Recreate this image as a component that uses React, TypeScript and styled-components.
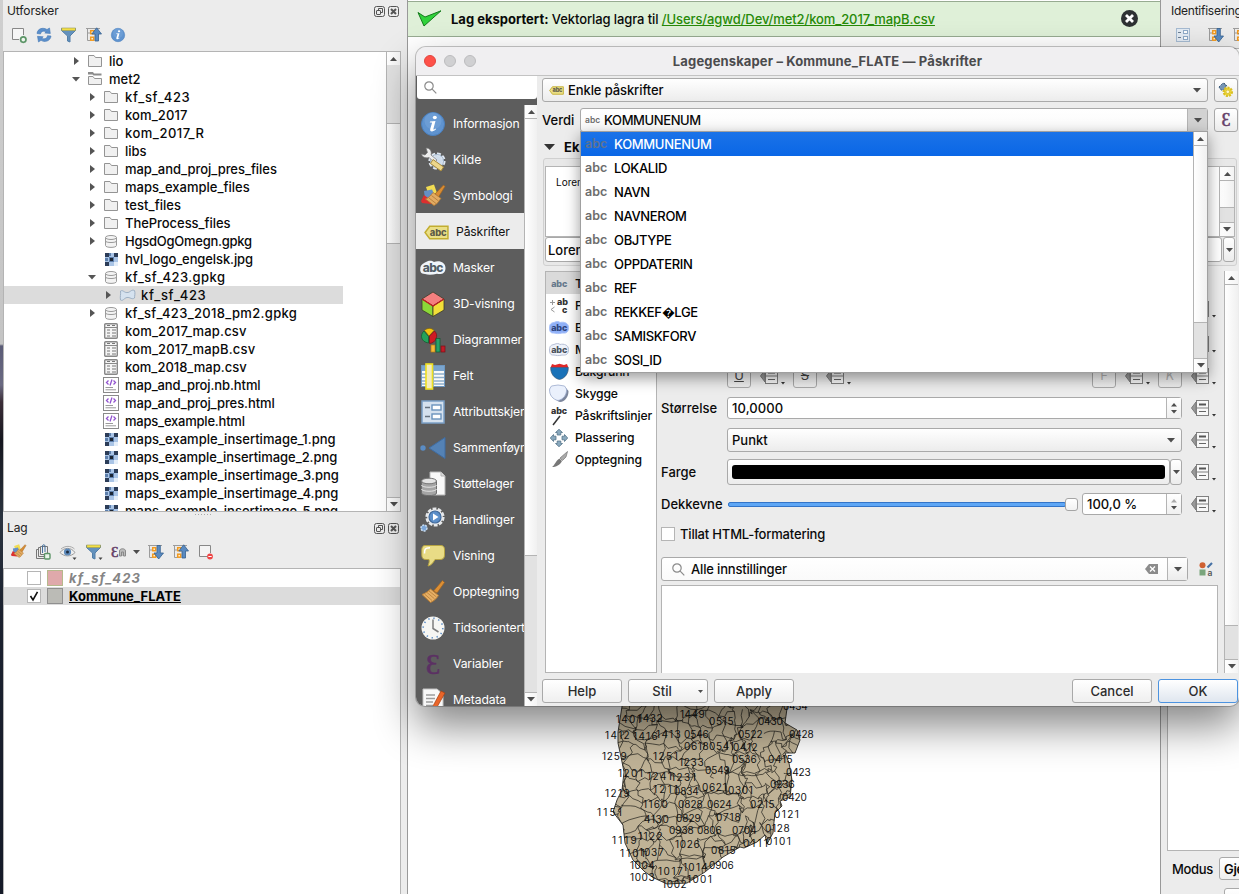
import React from "react";
import styled, { createGlobalStyle, css } from "styled-components";

const line = "#b4b4b4";
const panel = "#ececec";

const Global = createGlobalStyle`
  *, *::before, *::after { box-sizing: border-box; }
  html, body { margin: 0; padding: 0; width: 1239px; height: 894px; overflow: hidden; background: #fff; }
  body { font-family: Inter, "Liberation Sans", sans-serif; font-size: 13px; font-weight: 500; color: #0a0a0a; line-height: 16px; }
  svg { display: block; flex: none; overflow: visible; }
`;

/* ---------- window frame ---------- */

const Screen = styled.div`
  position: relative;
  display: flex;
  width: 1239px;
  height: 894px;
  overflow: hidden;
  background: ${panel};
`;

const DesktopEdge = styled.div`
  flex: none;
  width: 3px;
  background: linear-gradient(#cfcfcf 0, #c4c4c4 344px, #5b5c77 346px, #6a6a82 385px, #3b2e38 402px, #15161f 440px, #2b3440 520px, #1c2230 610px, #151a28 894px);
`;

const Docks = styled.div`
  flex: none;
  width: 404px;
  display: flex;
  flex-direction: column;
`;

const DockTitle = styled.div<{ $h: number }>`
  height: ${(p) => p.$h}px;
  flex: none;
  display: flex;
  align-items: center;
  justify-content: space-between;
  padding: 0 8px 0 4px;
  font-size: 12px;
  font-weight: 400;
  letter-spacing: -0.1px;
  color: #222;
`;

const DockButtons = styled.div`
  display: flex;
  gap: 3px;
`;

const DockTools = styled.div<{ $h: number }>`
  height: ${(p) => p.$h}px;
  flex: none;
  display: flex;
  align-items: center;
  gap: 9px;
  padding: 0 0 3px 8px;
`;

const MenuArrow = styled.span`
  margin: 0 -1px 0 -3px;
`;

const TreeBox = styled.div`
  display: flex;
  width: 398px;
  height: 461px;
  flex: none;
  border: 1px solid ${line};
  background: #fff;
`;

const TreeRows = styled.div`
  flex: 1;
  overflow: hidden;
`;

const TreeRow = styled.div<{ $depth: number; $selected?: boolean; $track: number }>`
  display: flex;
  align-items: center;
  height: 18px;
  width: ${(p) => (p.$selected ? "339px" : "auto")};
  padding-left: ${(p) => 66 + p.$depth * 16}px;
  letter-spacing: ${(p) => p.$track}px;
  background: ${(p) => (p.$selected ? "#dcdcdc" : "none")};
  white-space: nowrap;
`;

const ArrowSlot = styled.span`
  width: 12px;
  display: flex;
  justify-content: center;
`;

const IconSlot = styled.span<{ $w: number; $ml?: number; $mr?: number }>`
  flex: none;
  width: ${(p) => p.$w}px;
  margin-left: ${(p) => p.$ml ?? 0}px;
  margin-right: ${(p) => p.$mr ?? 0}px;
  display: flex;
  justify-content: center;
`;

const DockSplit = styled.div`
  height: 6px;
  flex: none;
  width: 398px;
  display: flex;
  justify-content: center;
  padding-top: 1px;
`;

const LayerBox = styled.div`
  width: 398px;
  flex: 1;
  border: 1px solid ${line};
  border-bottom: 0;
  background: #fff;
`;

const LayerRow = styled.div<{ $active?: boolean }>`
  display: flex;
  align-items: center;
  height: 18px;
  padding-left: 23px;
  background: ${(p) => (p.$active ? "#dcdcdc" : "#fff")};
  font-weight: 700;
  letter-spacing: ${(p) => (p.$active ? "0.05px" : "1.1px")};
  color: ${(p) => (p.$active ? "#000" : "#858585")};
  font-style: ${(p) => (p.$active ? "normal" : "italic")};
  text-decoration: ${(p) => (p.$active ? "underline" : "none")};
`;

const Check = styled.span`
  width: 14px;
  height: 14px;
  flex: none;
  border: 1px solid #b5b5b5;
  background: #fff;
  display: flex;
  align-items: center;
  justify-content: center;
`;

const Swatch = styled.span<{ $fill: string; $edge: string }>`
  width: 16px;
  height: 16px;
  margin: 0 6px;
  background: ${(p) => p.$fill};
  border: 1px solid ${(p) => p.$edge};
`;

/* ---------- scroll bars ---------- */

const Bar = styled.div<{ $w?: number }>`
  flex: none;
  width: ${(p) => p.$w ?? 14}px;
  display: flex;
  flex-direction: column;
  border-left: 1px solid ${line};
  background: #e2e2e2;
`;
const BarButton = styled.div`
  height: 13px;
  flex: none;
  display: flex;
  align-items: center;
  justify-content: center;
  background: linear-gradient(90deg, #fff, #f4f4f4);
`;
const BarHandle = styled.div<{ $top: number; $h: number }>`
  margin-top: ${(p) => p.$top}px;
  height: ${(p) => p.$h}px;
  border: solid ${line};
  border-width: 1px 0;
  background: linear-gradient(90deg, #fff, #f0f0f0);
`;
const BarGroove = styled.div`
  flex: 1;
  border-bottom: 1px solid ${line};
`;

const Tri = ({ dir = "down", c = "#4d4d4d", w = 8 }: { dir?: string; c?: string; w?: number }) => {
  const h = w / 2 + 0.5;
  if (dir === "right")
    return <svg width={5} height={8}><path d="M0 0L5 4L0 8Z" fill={c} /></svg>;
  return (
    <svg width={w} height={h}>
      <path d={dir === "up" ? `M0 ${h}H${w}L${w / 2} 0Z` : `M0 0H${w}L${w / 2} ${h}Z`} fill={c} />
    </svg>
  );
};

const ScrollBar = ({ top = 0, h, w }: { top?: number; h: number; w?: number }) => (
  <Bar $w={w}>
    <BarButton><Tri dir="up" w={7} /></BarButton>
    <BarHandle $top={top} $h={h} />
    <BarGroove />
    <BarButton><Tri w={8} /></BarButton>
  </Bar>
);

/* ---------- icons ---------- */

const FloatIcon = () => (
  <svg width="11" height="11" fill="none" stroke="#555">
    <rect x=".5" y=".5" width="10" height="10" rx="2" />
    <rect x="2.500" y="4.500" width="4" height="4" rx=".5" /><path d="M4.500 4.500V2.500H8.500V6.500H6.500" />
  </svg>
);
const CloseIcon = () => (
  <svg width="11" height="11" fill="none" stroke="#555">
    <rect x=".5" y=".5" width="10" height="10" rx="2" />
    <path d="M3 3L8 8M8 3L3 8" strokeWidth="2" />
  </svg>
);
const AddLayerIcon = () => (
  <svg width="16" height="16"><path d="M8 12.500H1.500V1.500H12.500V8" fill="#f6f6f6" stroke="#888" />
    <circle cx="12.300" cy="12.600" r="2.700" fill="#eef5ee" stroke="#5c9567" strokeWidth="1.700" /></svg>
);
const RefreshIcon = () => (
  <svg width="16" height="16" fill="#5b8fcb" stroke="#4479b5" strokeWidth=".6">
    <path d="M1 6.500C1.500 1.500 7 0 11 2.500L13.500 1L14.300 6.500L8.800 6L10.300 4.800C7.500 3.500 5 4.300 4.500 7Z" />
    <path d="M15 9C14.500 14.200 8.500 15.800 5 13.300L2.500 15L1.500 9.300L7.200 9.800L5.700 11.200C8.500 12.500 11 11.500 11.500 8.700Z" />
  </svg>
);
const FunnelIcon = ({ menu }: { menu?: boolean }) => (
  <svg width="16" height="16">
    <path d="M.5 1.500H14.500V3.500L9 9V15L6.500 14V9L.5 3.500Z" fill="#6391bd" stroke="#527fa9" />
    <rect x=".8" y="1" width="13.500" height="2.600" fill="#f3df45" stroke="#9a9a55" strokeWidth=".6" />
    {menu && <path d="M12.500 13.500H16.500L14.500 16Z" fill="#444" />}
  </svg>
);
const TreeArrowIcon = ({ down }: { down?: boolean }) => (
  <svg width="16" height="16">
    <path d="M0 1.500H14M1.500 1.500V13.500H4M1.500 6H4" stroke="#9c9c9c" fill="none" />
    <rect x="4.700" y="3.700" width="3" height="3" fill="#fff3dc" stroke="#f29a1f" strokeWidth="1.500" />
    <rect x="4.700" y="10.200" width="3" height="3" fill="#fff3dc" stroke="#f29a1f" strokeWidth="1.500" />
    <path d={down ? "M9 1.500H12.300V9H15.500L10.700 15L6 9H9Z" : "M9 14V7H5.800L10.700 .8L15.500 7H12.500V14Z"} fill="#5a8ac0" stroke="#35618f" strokeWidth=".8" />
  </svg>
);
const InfoIcon = ({ s = 14 }: { s?: number }) => (
  <svg width={s} height={s} viewBox="0 0 24 24">
    <circle cx="12" cy="12" r="11.500" fill="#5f93cf" stroke="#4a7fbd" />
    <circle cx="12" cy="9" r="8.500" fill="#79a8dc" opacity=".5" />
    <ellipse cx="13.800" cy="5.500" rx="2" ry="1.800" fill="#fff" />
    <path d="M9 9.500L14.500 9L12.400 17C12.300 18 13.200 17.700 14.700 16.500L15 17.300C12.500 20 8.500 20.500 9.200 17L11 11C10.800 10.300 10 10.500 8.800 10.600Z" fill="#fff" />
  </svg>
);
const BrushIcon = ({ s = 24 }: { s?: number }) => (
  <svg width={s} height={s} viewBox="0 0 24 24">
    <path d="M5 3L13 .5L16 9L8 12Z" fill="#f1dc52" /><path d="M3 7L11 5.500L14 12L4 15Z" fill="#6590c6" />
    <path d="M0 17L3 11L11 17L10 20L1 19Z" fill="#dc2f2f" />
    <path d="M14 10L22.500 1L24 2.500L17.500 13Z" fill="#d98c33" stroke="#9b6322" strokeWidth=".7" />
    <path d="M12 8.500L20 14.500C18 16 17 20 13 21.500L4.500 15C8 14 10 11 12 8.500Z" fill="#e2ab63" stroke="#b67b32" strokeWidth=".8" />
    <path d="M8 14L15 19.500M10.500 11.500L17.500 17" stroke="#b9833f" />
  </svg>
);
const GroupIcon = () => (
  <svg width="16" height="16" fill="none" stroke="#777">
    <path d="M3.500 5.500H1.500V14.500H9M5.500 3.500H3.500V12.500H9" /><path d="M12.500 9V2.500H5.500V10.500H9" fill="#eee" />
    <path d="M7.500 9V2C7.500 .3 10 .3 10 2V8" stroke="#47719d" /><rect x="9.500" y="9.500" width="5.500" height="5.500" rx="1" fill="#eaf5ea" stroke="#5c9567" strokeWidth="1.400" />
  </svg>
);
const EyeIcon = () => (
  <svg width="17" height="16">
    <path d="M0 8.500C4 3 11 3 15 8.500C11 13 4 13 0 8.500Z" fill="#eee" stroke="#9a9a9a" />
    <path d="M1 5C5 1.500 11 1.500 14.500 5" stroke="#aaa" fill="none" />
    <circle cx="7.500" cy="8" r="3.600" fill="#5d8abb" /><circle cx="7.500" cy="8" r="1.500" fill="#1f2d40" />
    <path d="M12.500 13.500H16.500L14.500 16Z" fill="#444" />
  </svg>
);
const Epsilon = styled.span<{ $s: number; $c?: string }>`
  font-family: "Liberation Serif", "DejaVu Serif", serif;
  font-weight: 400;
  font-size: ${(p) => p.$s}px;
  line-height: ${(p) => Math.round(p.$s * 0.9)}px;
  color: ${(p) => p.$c ?? "#664169"};
  -webkit-text-stroke: 0.5px ${(p) => p.$c ?? "#664169"};
`;
const EpsWrap = styled.span`
  display: flex;
  align-items: center;
  width: 16px;
  height: 16px;
`;
const RemoveIcon = () => (
  <svg width="16" height="16"><path d="M9 12.500H1.500V1.500H12.500V9" fill="#f4f4f4" stroke="#888" />
    <circle cx="12" cy="12.500" r="2.900" fill="#ee4444" /><path d="M10.300 12.500H13.700" stroke="#fff" /></svg>
);
const FolderIcon = ({ open }: { open?: boolean }) => (
  <svg width="14" height="14">
    {open && <path d="M0 0H5L6 1.500H13.500V3.500H5.500L4.500 2.500H0Z" fill="#8c8c8c" />}
    <path d={open ? "M.5 12.500V4.500H5L6.500 6.500H13.500V12.500Z" : "M.5 12.500V1.500H6L7.500 3.500H13.500V12.500Z"} fill="#f0f0f0" stroke="#949494" />
  </svg>
);
const DbIcon = () => (
  <svg width="12" height="13" fill="#f3f3f3" stroke="#9a9a9a">
    <path d="M.5 2.500V10.500C.5 13 11.500 13 11.500 10.500V2.500" /><ellipse cx="6" cy="2.500" rx="5.500" ry="2" />
    <path d="M.5 6C.5 8 11.500 8 11.500 6" fill="none" />
  </svg>
);
const ImageIcon = () => (
  <svg width="13" height="13">
    <rect width="13" height="13" fill="#a9c4e6" />
    <path d="M0 0H4V4H0ZM9 0H13V4H9ZM0 9H4V13H0Z" fill="#2c3d58" />
    <path d="M4 0H6V3H4ZM4 4H9V9H4ZM0 5H3V8H0Z" fill="#5d7fab" /><rect x="5" y="5" width="3" height="3" fill="#1b2534" />
    <path d="M9 9H13V13H9Z" fill="#e3edf8" />
  </svg>
);
const TableIcon = () => (
  <svg width="14" height="16">
    <rect x=".7" y=".7" width="12.600" height="14.600" rx="1" fill="#f5f5f5" stroke="#888" strokeWidth="1.400" />
    <path d="M1 4.500H13" stroke="#888" />
    <path d="M3 2.500H6M8 2.500H11M3 7H6M8 7H12M3 10H6M8 10H12M3 13H6M8 13H12" stroke="#777" strokeWidth="1.200" />
  </svg>
);
const HtmlIcon = () => (
  <svg width="16" height="16" fill="none">
    <rect x=".5" y=".5" width="15" height="15" fill="#fff" stroke="#8a8a8a" />
    <path d="M5.500 3.500L3.500 5.500L5.500 7.500M10.500 3.500L12.500 5.500L10.500 7.500M9 2.500L7 8.500" stroke="#9254cf" strokeWidth="1.300" />
    <path d="M2.500 10.500H10M2.500 12.800H13" stroke="#9a9a9a" />
  </svg>
);
const PolyIcon = () => (
  <svg width="17" height="13"><path d="M1.500 2C4 .5 5.500 4 8 3.500C11 4 12 0 15.500 1.500C16.500 4 15.500 7 15.500 9C13 11 11 8 8 8.500C5 9 4 12.500 1.500 11C.8 8 2 5 1.500 2Z" fill="#d5e2ef" stroke="#9db0c4" /></svg>
);
const SearchIcon = ({ s = 13 }: { s?: number }) => (
  <svg width={s} height={s} viewBox="0 0 13 13" fill="none" stroke="#8b8b8b" strokeWidth="1.200"><circle cx="5" cy="5" r="4.200" /><path d="M8.200 8.200L12.300 12.300" /></svg>
);
const OverrideIcon = () => (
  <svg width="18" height="16">
    <path d="M5 2L.5 8L5 14Z" fill="#999" stroke="#7a7a7a" />
    <rect x="5.500" y=".5" width="12" height="15" fill="#f8f8f8" stroke="#808080" />
    <path d="M5.500 8H17.500" stroke="#808080" /><path d="M8 4.500H15" stroke="#555" strokeWidth="2" /><path d="M8 11.500H15" stroke="#666" />
  </svg>
);
const TagIcon = ({ w = 24, h = 14 }: { w?: number; h?: number }) => (
  <svg width={w} height={h} viewBox="0 0 24 14">
    <path d="M1 7L5.500 1H23V13H5.500Z" fill="#eadf86" stroke="#c2ad30" strokeWidth="1.400" />
    <text x="5.500" y="10" fontSize="9" fontWeight="800" fill="#5d5a48" textLength="16">abc</text>
  </svg>
);
const MiniAbc = ({ c = "#4b545e", blob, edge }: { c?: string; blob?: string; edge?: string }) => (
  <svg width="20" height="14">
    {blob && <path d="M5 1.500C8 0 10 .5 11 1.500C15 .5 19.500 2 19.500 6.500C19.500 11.500 17 12.500 13 12C10 13 7 12.500 5 12C1 12.500 .5 9.500 .5 7C.5 3 2 2 5 1.500Z" fill={blob} stroke={edge} />}
    <text x="2.200" y="10.300" fontSize="9" fontWeight="800" fill={c} textLength="16">abc</text>
  </svg>
);

const side: Record<string, React.ReactNode> = {
  info: <InfoIcon s={24} />,
  source: (
    <svg width="24" height="24">
      <circle cx="16" cy="13" r="6.800" fill="#cfdceb" stroke="#dfe7f0" strokeWidth="3.600" strokeDasharray="3.600 1.700" />
      <circle cx="16" cy="13" r="6.500" fill="none" stroke="#9fb3ca" />
      <path d="M5 0C9 0 11 3 10 7L16 12L13.500 14.500L8 9.500C4 10.500 1 9 .5 6L4 7L6.500 4.500Z" fill="#ededed" stroke="#777" strokeWidth=".7" />
      <path d="M12 11.500L22.500 19L20 23L9.500 15.500Z" fill="#edd78b" stroke="#a88b3c" />
    </svg>
  ),
  brush: <BrushIcon />,
  tag: <TagIcon w={25} h={15} />,
  mask: (
    <svg width="26" height="18">
      <path d="M6 3C9 1 12 1.500 14 3C19 1 25.500 3 25.500 9C25.500 15 21 15.500 17 14.800C12 16 8 16 5 15C.5 15 0 12 .3 9.500C.5 6 3 4.500 6 3Z" fill="#f0f5fa" />
      <text x="2.800" y="13" fontSize="12" fontWeight="800" fill="#525d66" textLength="20.500">abc</text>
    </svg>
  ),
  cube: (
    <svg width="24" height="26" stroke="#3b3b2a" strokeWidth=".8">
      <path d="M12 1L23 8L12 15L1 8Z" fill="#f47f7f" /><path d="M1 8L12 15V25.500L1 19Z" fill="#8bd838" /><path d="M23 8L12 15V25.500L23 19Z" fill="#f2df38" />
      <path d="M1 8L12 15L23 8" fill="none" stroke="#c02020" strokeWidth="1.300" />
    </svg>
  ),
  chart: (
    <svg width="25" height="25" strokeWidth=".7">
      <path d="M8 8L3.500 2.500C6 -.3 11 -.3 13 2.500Z" fill="#f5c211" stroke="#8a6d00" /><path d="M8.500 8L13.500 3C18 7 15 15 8.500 15.500Z" fill="#d01b24" stroke="#7a1016" />
      <path d="M7.500 8.500V15C0 14 -1.500 7 3 3Z" fill="#26a25a" stroke="#0f5a2e" />
      <rect x="10" y="17" width="4" height="7" fill="#f5b83a" stroke="#b87c10" /><rect x="15" y="10.500" width="4" height="13.500" fill="#26a269" stroke="#0f5a2e" /><rect x="20" y="18" width="4" height="6" fill="#c01c28" stroke="#7a1016" />
    </svg>
  ),
  fields: (
    <svg width="24" height="24">
      <rect x=".5" y="1.500" width="23" height="21" fill="#fafafa" stroke="#6d97c0" /><rect x="1" y="2" width="22" height="5" fill="#7aa5cf" />
      <path d="M1 10H23M1 13.500H23M1 17H23M1 20H23" stroke="#8faecb" strokeWidth="1.300" /><path d="M12.500 7V22" stroke="#8faecb" />
      <rect x="5" y="0" width="6.500" height="25" fill="#f3ecbb" stroke="#eedf21" strokeWidth="1.600" />
    </svg>
  ),
  form: (
    <svg width="24" height="24"><rect x="1" y="1" width="22" height="22" fill="#d5e1ee" stroke="#7a9fc6" strokeWidth="1.500" />
      <g fill="#fff" stroke="#6a93bd" strokeWidth="1.400"><rect x="11" y="5" width="9" height="5" /><rect x="11" y="14" width="9" height="5" /></g>
      <path d="M4 7.500H9M4 16.500H9" stroke="#66727f" strokeWidth="1.600" /></svg>
  ),
  join: (
    <svg width="26" height="24"><path d="M9 12L25 1.500V22.500Z" fill="#5482b5" stroke="#3f6da3" /><circle cx="3" cy="12" r="2.700" fill="#5a8cc4" /></svg>
  ),
  aux: (
    <svg width="25" height="24"><path d="M9 0H20L24 4V23H9Z" fill="#f8f8f8" stroke="#b5b5b5" /><path d="M20 0V4H24" fill="#ddd" stroke="#b5b5b5" />
      <path d="M.5 9V21C.5 24.500 15.500 24.500 15.500 21V9Z" fill="#a5a5a5" stroke="#6c6c6c" /><ellipse cx="8" cy="9" rx="7.500" ry="2.800" fill="#e3e3e3" stroke="#777" />
      <path d="M.5 13C.5 16 15.500 16 15.500 13M.5 17C.5 20 15.500 20 15.500 17" fill="none" stroke="#e2e2e2" /></svg>
  ),
  gear: (
    <svg width="26" height="26"><circle cx="15" cy="10" r="7.800" fill="#f0f0f0" stroke="#e6e8ea" strokeWidth="3.600" strokeDasharray="3.500 1.400" />
      <circle cx="15" cy="10" r="6" fill="#5c8fc9" stroke="#41699a" strokeWidth="1.200" /><path d="M13 6.500L18.500 10L13 13.500Z" fill="#fff" />
      <circle cx="4" cy="21" r="3" fill="#7ba6d8" stroke="#c9dcf0" strokeWidth="1.500" strokeDasharray="2 1" /></svg>
  ),
  tip: (
    <svg width="24" height="24"><path d="M4 1.500H20C23 1.500 23.500 4 23.500 6V11C23.500 14 22 15.500 19 15.500H14C12 19 10 21.500 7 22C8 19.500 8.500 17.500 8 15.500H5C2 15.500 .8 14 .8 11V6C.8 3 2 1.500 4 1.500Z" fill="#e9dc86" stroke="#b6a442" /><path d="M3.500 9.500C3.500 5 4 4 9 3.700" stroke="#fff" strokeWidth="1.500" fill="none" /></svg>
  ),
  broom: (
    <svg width="24" height="24"><path d="M12.500 11L21.500 .5L23.500 2.500L16 13Z" fill="#dd8f34" stroke="#9b6322" strokeWidth=".7" />
      <path d="M9.500 9L17.500 15.500C16 18 13 21 9.500 22.500L1 14.500C4 13.500 7 11.500 9.500 9Z" fill="#e6af66" stroke="#b67b32" /><path d="M3.500 14L11 20.500M6 12.500L13.500 18.800M8 11L15.500 17" stroke="#c08840" /></svg>
  ),
  clock: (
    <svg width="24" height="24"><circle cx="12" cy="12" r="11.500" fill="#f6f6f3" /><circle cx="12" cy="12" r="9.800" fill="none" stroke="#5f8fc6" strokeWidth="1.600" strokeDasharray="1.400 3.730" />
      <path d="M12 3.500V12.500L17.500 16" fill="none" stroke="#7d7d7d" strokeWidth="1.500" /></svg>
  ),
  eps: <Epsilon $s={29} $c="#5b3063">Ɛ</Epsilon>,
  meta: (
    <svg width="24" height="24"><path d="M2 1H16L22 6V25H2Z" fill="#f8f8f8" stroke="#c3c3c3" /><path d="M5 7H14M5 10.500H14M5 14H12M5 17.500H12" stroke="#9c9c9c" strokeWidth="1.300" />
      <path d="M20 3L24 5L15.500 20L12 22L12 18Z" fill="#e9652a" stroke="#a33f10" strokeWidth=".7" /></svg>
  ),
};

/* ---------- canvas and map ---------- */

const Canvas = styled.div`
  position: relative;
  flex: none;
  width: 754px;
  height: 894px;
  display: flex;
  flex-direction: column;
  border: solid #999;
  border-width: 0 1px;
  background: #fff;
`;

const MessageBar = styled.div`
  display: flex;
  align-items: center;
  height: 36px;
  margin-top: 1px;
  flex: none;
  padding: 0 22px 1px 9px;
  border: solid #97ab91;
  border-width: 1px 0;
  background: #dff0d8;
  white-space: pre;
  letter-spacing: -0.1px;
  b { font-weight: 700; margin-left: 9px; letter-spacing: 0; }
  a { color: #278a08; text-decoration: underline; margin-right: auto; }
`;

const MapArea = styled.div`
  margin-top: auto;
  height: 194px;
  margin-left: 182px;
`;

const MapLabel = styled.text`
  font-size: 10px;
  font-weight: 400;
  letter-spacing: 0.3px;
  fill: #111;
`;

const outline =
  "M34 -6L28 32L28 43L31 57L34 72L32 90L27 100L23 112L33 125L35 143L43 160L55 172L64 178L77 184L97 183L115 172L133 157L150 147L154 148L167 142L175 135L177 144L183 133L184 122L185 113L192 106L190 101L200 97L202 80L199 63L195 53L205 53L210 40L207 30L195 23L199 -6Z";

const rnd = (n: number) => {
  const v = Math.sin(n * 127.1 + 311.7) * 43758.5453;
  return v - Math.floor(v);
};

/* Municipality borders: a jittered mesh that is finer towards the east. */
const borders = (() => {
  const xs: number[] = [];
  for (let x = 16; x < 215; x += x > 140 ? 8 : 11.5) xs.push(x);
  const cols = xs.length;
  const pt = (i: number, j: number) => [
    xs[Math.min(i, cols - 1)] + (rnd(i * 31 + j * 7) - 0.5) * 14,
    -6 + j * 10.5 + (rnd(i * 17 + j * 53) - 0.5) * 13,
  ];
  let d = "";
  for (let j = 0; j < 19; j++)
    for (let i = 0; i < cols; i++) {
      const [x, y] = pt(i, j);
      [pt(i + 1, j), pt(i, j + 1)].forEach(([u, v], k) => {
        const s = i * 97 + j * 13 + k * 7;
        if (rnd(s) < 0.14) return;
        const a = (x * 2 + u) / 3 + (rnd(s + 1) - 0.5) * 5;
        const b = (y * 2 + v) / 3 + (rnd(s + 2) - 0.5) * 5;
        const e = (x + u * 2) / 3 + (rnd(s + 3) - 0.5) * 5;
        const f = (y + v * 2) / 3 + (rnd(s + 4) - 0.5) * 5;
        d += `M${x.toFixed(1)} ${y.toFixed(1)}L${a.toFixed(1)} ${b.toFixed(1)}L${e.toFixed(1)} ${f.toFixed(1)}L${u.toFixed(1)} ${v.toFixed(1)}`;
      });
    }
  return d;
})();

const codes: [string, number, number][] = [
  ["1401", 616, 719], ["1432", 638, 718], ["1449", 680, 714], ["0515", 709, 721], ["0430", 758, 721], ["0434", 783, 706],
  ["1412", 605, 735], ["1416", 633, 736], ["1413", 656, 734], ["0546", 684, 734], ["0522", 738, 734], ["0428", 789, 734],
  ["0618", 684, 746], ["0541", 709, 746], ["0412", 733, 747], ["1259", 602, 756], ["1251", 653, 756], ["1233", 679, 762],
  ["0536", 732, 759], ["0415", 768, 759], ["1201", 618, 773], ["1241", 647, 776], ["1231", 671, 777], ["0549", 705, 770],
  ["0423", 786, 772], ["1219", 605, 793], ["1211", 653, 789], ["0834", 674, 791], ["0621", 702, 787], ["0301", 728, 790],
  ["0236", 770, 784], ["0420", 782, 797], ["1160", 643, 804], ["0828", 678, 804], ["0624", 707, 804], ["0215", 750, 804],
  ["1151", 597, 812], ["0121", 774, 814], ["4130", 644, 819], ["0829", 676, 818], ["0718", 716, 817], ["0938", 669, 830],
  ["0806", 697, 830], ["0704", 732, 830], ["0128", 765, 828], ["1119", 612, 840], ["1122", 638, 836], ["1026", 675, 844],
  ["0815", 711, 850], ["0111", 743, 843], ["0101", 766, 841], ["1101", 620, 853], ["1037", 639, 852], ["1004", 630, 865],
  ["1017", 658, 871], ["1014", 683, 867], ["0906", 709, 865], ["1003", 630, 877], ["1002", 662, 884], ["1001", 687, 879],
];

const MunicipalityMap = () => (
  <svg width="240" height="194">
    <defs><clipPath id="land"><path d={outline} /></clipPath></defs>
    <path d={outline} fill="#bfb296" stroke="#2a2823" strokeWidth=".9" />
    <path d={borders} clipPath="url(#land)" fill="none" stroke="#2a2823" strokeWidth=".75" />
    {codes.map(([c, x, y]) => (
      <MapLabel key={c} x={x - 590} y={y - 696.3} textLength="25">{c}</MapLabel>
    ))}
  </svg>
);

/* ---------- identify dock ---------- */

const IdentifyDock = styled.div`
  flex: 1;
  min-width: 0;
  display: flex;
  flex-direction: column;
  overflow: hidden;
`;
const IdentifyTitle = styled.div`
  height: 22px;
  padding: 3px 0 0 10px;
  font-size: 12px;
  font-weight: 400;
  letter-spacing: -0.25px;
  color: #222;
  white-space: nowrap;
`;
const IdentifyTools = styled.div`
  height: 26px;
  display: flex;
  flex: none;
  align-items: center;
  gap: 9px;
  padding-left: 15px;
`;
const ToolRule = styled.i`
  width: 1px;
  height: 12px;
  background: #c5c5c5;
`;
const IdentifyBox = styled.div`
  flex: 1;
  margin-left: 6px;
  border: solid ${line};
  border-width: 1px 0 1px 1px;
  background: #fff;
`;
const ModeRow = styled.div`
  height: 43px;
  flex: none;
  display: flex;
  padding: 6px 0 0 11px;
  line-height: 24px;
  letter-spacing: -0.3px;
`;
const ModeLabel = styled.span`
  width: 47px;
  flex: none;
`;
const ModeColumn = styled.div`
  display: flex;
  flex-direction: column;
  gap: 8px;
  width: 80px;
  flex: none;
`;
const ModeField = styled.div<{ $ml?: number }>`
  height: 23px;
  flex: none;
  margin-left: ${(p) => p.$ml ?? 0}px;
  padding-left: 4px;
  border: 1px solid #a9a9a9;
  border-radius: 3px;
  background: linear-gradient(#fff, #efefef);
  font-weight: 600;
  line-height: 22px;
`;

/* ---------- dialog ---------- */

const Dialog = styled.section`
  position: absolute;
  left: 416px;
  top: 47px;
  width: 823px;
  height: 659px;
  display: flex;
  flex-direction: column;
  border-radius: 10px 10px 9px 9px;
  background: ${panel};
  box-shadow: 0 0 0 1px rgba(0, 0, 0, 0.22), 0 20px 42px rgba(0, 0, 0, 0.48);
`;
const TitleBar = styled.header`
  position: relative;
  display: flex;
  align-items: center;
  justify-content: center;
  flex: none;
  height: 29px;
  border-bottom: 1px solid #c3c3c3;
  border-radius: 10px 10px 0 0;
  background: #f0eff1;
  font-weight: 700;
  color: #4b4b4d;
  letter-spacing: 0.14px;
`;
const Lights = styled.div`
  position: absolute;
  left: 8px;
  top: 8px;
  display: flex;
  gap: 8px;
`;
const Light = styled.i<{ $c: string; $edge: string }>`
  width: 12px;
  height: 12px;
  border-radius: 50%;
  background: ${(p) => p.$c};
  border: 1px solid ${(p) => p.$edge};
`;
const DialogBody = styled.div`
  flex: 1;
  min-height: 0;
  display: flex;
`;
const Sidebar = styled.nav`
  width: 121px;
  flex: none;
  display: flex;
  flex-direction: column;
  background: #5d5d5d;
  border-radius: 0 0 0 9px;
  overflow: hidden;
`;
const SideSearch = styled.div`
  height: 23px;
  flex: none;
  margin: 0 0 6px 1px;
  padding-left: 7px;
  display: flex;
  align-items: center;
  background: #fff;
  border-radius: 0 0 3px 3px;
`;
const SideMain = styled.div`
  flex: 1;
  min-height: 0;
  display: flex;
`;
const SideList = styled.div`
  flex: 1;
  min-width: 0;
  overflow: hidden;
`;
const SideItem = styled.div<{ $on?: boolean }>`
  height: 36px;
  display: flex;
  align-items: center;
  padding: 2px 0 0 4px;
  white-space: nowrap;
  font-size: 12.2px;
  font-weight: 400;
  letter-spacing: -0.15px;
  color: ${(p) => (p.$on ? "#111" : "#fff")};
  background: ${(p) => (p.$on ? panel : "none")};
`;

const Content = styled.div`
  flex: 1;
  min-width: 0;
  display: flex;
  flex-direction: column;
  padding: 2px 1px 3px 5px;
`;
const TopRow = styled.div<{ $mt?: number }>`
  display: flex;
  height: 24px;
  flex: none;
  align-items: center;
  margin-top: ${(p) => p.$mt ?? 0}px;
`;
const raised = css`
  border: 1px solid #a9a9a9;
  border-radius: 3px;
  background: linear-gradient(#fff, #ececec);
`;
const Combo = styled.div<{ $w: number; $flat?: boolean }>`
  position: relative;
  ${raised}
  width: ${(p) => p.$w}px;
  height: 24px;
  flex: none;
  display: flex;
  align-items: center;
  padding: 0 6px 0 4px;
  ${(p) => p.$flat && "background: linear-gradient(#fff, #fafafa); padding-right: 0;"}
`;
const Grow = styled.span<{ $pl?: number; $track?: number }>`
  flex: 1;
  min-width: 0;
  padding-left: ${(p) => p.$pl ?? 0}px;
  letter-spacing: ${(p) => p.$track ?? 0}px;
  white-space: nowrap;
`;
const ComboDrop = styled.span<{ $w: number; $dark?: boolean }>`
  width: ${(p) => p.$w}px;
  align-self: stretch;
  display: flex;
  align-items: center;
  justify-content: center;
  border-left: 1px solid ${line};
  background: ${(p) => (p.$dark ? "#d2d2d2" : "linear-gradient(#fff, #ececec)")};
`;
const SquareButton = styled.div`
  ${raised}
  width: 24px;
  height: 24px;
  margin-left: auto;
  display: flex;
  align-items: center;
  justify-content: center;
`;
const FieldLabel = styled.span<{ $w: number }>`
  width: ${(p) => p.$w}px;
  flex: none;
  white-space: nowrap;
`;
const SectionHead = styled.div`
  height: 26px;
  flex: none;
  display: flex;
  align-items: center;
  gap: 9px;
  padding: 4px 0 0 2px;
  font-weight: 700;
`;
const Group = styled.div`
  height: 108px;
  flex: none;
  margin: 0 1px 5px 1px;
  padding: 7px 1px 3px;
  border: 1px solid #d0d0d0;
  border-radius: 3px;
  display: flex;
  flex-direction: column;
  justify-content: space-between;
  background: #e8e8e8;
`;
const Preview = styled.div`
  height: 71px;
  display: flex;
  justify-content: space-between;
  border: 1px solid ${line};
  background: #fff;
  font-size: 10px;
  font-weight: 400;
  line-height: 30px;
  padding-left: 10px;
`;
const SampleRow = styled.div`
  display: flex;
  height: 25px;
  gap: 1px;
`;
const SampleEdit = styled.div`
  flex: 1;
  border: 1px solid #a9a9a9;
  border-radius: 3px;
  background: #fff;
  padding-left: 2px;
  line-height: 24px;
`;
const SampleDrop = styled.div`
  ${raised}
  width: 12px;
  display: flex;
  align-items: center;
  justify-content: center;
`;

const Split = styled.div`
  flex: none;
  height: 402px;
  display: flex;
  padding-left: 3px;
`;
const StyleList = styled.div`
  width: 112px;
  flex: none;
  border: 1px solid ${line};
  background: #fff;
`;
const StyleRow = styled.div<{ $on?: boolean }>`
  height: 22px;
  display: flex;
  align-items: center;
  padding-top: 1px;
  white-space: nowrap;
  overflow: hidden;
  font-size: 12.2px;
  letter-spacing: -0.15px;
  background: ${(p) => (p.$on ? "#dadada" : "none")};
`;
const Settings = styled.div`
  flex: 1;
  min-width: 0;
  display: flex;
  flex-direction: column;
  padding: 19px 0 0 4px;
  overflow: hidden;
`;
const FormRow = styled.div<{ $h?: number }>`
  height: ${(p) => p.$h ?? 32}px;
  flex: none;
  display: flex;
  align-items: center;
`;
const Wide = styled.div`
  width: 455px;
  flex: none;
  display: flex;
  align-items: center;
`;
const InputBox = styled.div<{ $w: number }>`
  width: ${(p) => p.$w}px;
  height: 22px;
  flex: none;
  display: flex;
  align-items: center;
  padding-left: 4px;
  border: 1px solid #a9a9a9;
  border-radius: 3px;
  background: #fff;
`;
const Spinner = styled.span`
  width: 15px;
  align-self: stretch;
  display: flex;
  flex-direction: column;
  align-items: center;
  justify-content: center;
  gap: 4px;
  border-left: 1px solid ${line};
  background: linear-gradient(#fff, #f0f0f0);
`;
const OverrideSlot = styled.span`
  display: flex;
  align-items: flex-end;
  gap: 3px;
  margin-left: 9px;
`;
const FormatButton = styled.span<{ $dim?: boolean; $deco?: string; $ml?: string; $slant?: boolean }>`
  ${raised}
  width: 24px;
  height: 24px;
  flex: none;
  margin-left: ${(p) => p.$ml ?? 0};
  text-align: center;
  line-height: 21px;
  font-size: 13px;
  font-weight: 400;
  font-style: ${(p) => (p.$slant ? "italic" : "normal")};
  text-decoration: ${(p) => p.$deco ?? "none"};
  color: ${(p) => (p.$dim ? "#b5b5b5" : "#444")};
`;
const ColorBox = styled.div`
  ${raised}
  width: 443px;
  height: 26px;
  padding: 5px 4px;
`;
const ColorFill = styled.div`
  height: 14px;
  border-radius: 3px;
  background: #000;
`;
const ColorDrop = styled.div`
  ${raised}
  width: 12px;
  height: 26px;
  display: flex;
  align-items: center;
  justify-content: center;
`;
const Track = styled.div`
  width: 338px;
  height: 5px;
  margin-left: 1px;
  border: 1px solid #3274c8;
  border-radius: 2px;
  background: #5ea6f5;
`;
const Knob = styled.div`
  width: 13px;
  height: 13px;
  margin: 0 4px 0 -1px;
  border: 1px solid #a5a5a5;
  border-radius: 3px;
  background: linear-gradient(#fff, #f2f2f2);
`;
const BottomList = styled.div`
  width: 557px;
  flex: 1;
  margin-top: -5px;
  border: 1px solid ${line};
  border-bottom: 0;
  background: #fff;
`;
const ButtonRow = styled.footer`
  display: flex;
  align-items: center;
  gap: 6px;
  margin-top: auto;
  height: 24px;
  flex: none;
`;
const PushButton = styled.button<{ $primary?: boolean; $push?: boolean; $menu?: boolean }>`
  position: relative;
  width: 80px;
  height: 24px;
  flex: none;
  margin: 0;
  margin-left: ${(p) => (p.$push ? "auto" : "0")};
  padding: 0 ${(p) => (p.$menu ? 12 : 0)}px 0 0;
  display: flex;
  align-items: center;
  justify-content: center;
  border: 1px solid ${(p) => (p.$primary ? "#4c93e0" : "#a9a9a9")};
  border-radius: 3px;
  background: ${(p) => (p.$primary ? "linear-gradient(#fff, #dfe6ef)" : "linear-gradient(#fff, #efefef)")};
  font: inherit;
  color: #2c2c2c;
`;
const MenuMark = styled.span`
  position: absolute;
  right: 4px;
  top: 10px;
`;

/* Open drop-down list over the dialog */
const Popup = styled.div`
  position: absolute;
  z-index: 5;
  left: -1px;
  top: 22px;
  width: 628px;
  height: 242px;
  display: flex;
  border: 1px solid #a0a0a0;
  background: #fff;
  box-shadow: 0 5px 14px rgba(0, 0, 0, 0.4);
`;
const Options = styled.div`
  flex: 1;
`;
const Option = styled.div<{ $on?: boolean }>`
  height: 24px;
  display: flex;
  align-items: center;
  padding-left: 4px;
  letter-spacing: -0.33px;
  color: ${(p) => (p.$on ? "#fff" : "#000")};
  background: ${(p) => (p.$on ? "linear-gradient(#1b73e8, #0a67e6)" : "none")};
`;
const TypeMark = styled.span<{ $small?: boolean; $on?: boolean }>`
  width: ${(p) => (p.$small ? 19 : 29)}px;
  font-size: ${(p) => (p.$small ? 8.5 : 12.5)}px;
  font-weight: 600;
  letter-spacing: 0;
  color: ${(p) => (p.$on ? "#5f7390" : "#6d6d6d")};
`;

/* ---------- data ---------- */

type Node = [name: string, depth: number, icon: string, arrow: string, track: number];
const tree: Node[] = [
  ["lio", 0, "folder", "right", 0], ["met2", 0, "open", "down", 0], ["kf_sf_423", 1, "folder", "right", 0.62], ["kom_2017", 1, "folder", "right", 0.12],
  ["kom_2017_R", 1, "folder", "right", 0.5], ["libs", 1, "folder", "right", 0], ["map_and_proj_pres_files", 1, "folder", "right", -0.04],
  ["maps_example_files", 1, "folder", "right", 0], ["test_files", 1, "folder", "right", 0.05], ["TheProcess_files", 1, "folder", "right", -0.05],
  ["HgsdOgOmegn.gpkg", 1, "db", "right", -0.25], ["hvl_logo_engelsk.jpg", 1, "image", "", -0.1], ["kf_sf_423.gpkg", 1, "db", "down", 0.42],
  ["kf_sf_423", 2, "poly", "right", 0.62], ["kf_sf_423_2018_pm2.gpkg", 1, "db", "right", 0.32], ["kom_2017_map.csv", 1, "table", "", 0.17],
  ["kom_2017_mapB.csv", 1, "table", "", 0.17], ["kom_2018_map.csv", 1, "table", "", 0], ["map_and_proj.nb.html", 1, "html", "", -0.1],
  ["map_and_proj_pres.html", 1, "html", "", -0.09], ["maps_example.html", 1, "html", "", -0.22], ["maps_example_insertimage_1.png", 1, "image", "", 0.02],
  ["maps_example_insertimage_2.png", 1, "image", "", -0.06], ["maps_example_insertimage_3.png", 1, "image", "", 0.02],
  ["maps_example_insertimage_4.png", 1, "image", "", 0], ["maps_example_insertimage_5.png", 1, "image", "", 0],
];
const treeIcons: Record<string, React.ReactNode> = {
  folder: <FolderIcon />, open: <FolderIcon open />, db: <DbIcon />, image: <ImageIcon />, table: <TableIcon />, html: <HtmlIcon />, poly: <PolyIcon />,
};

const sections: [string, string][] = [
  ["Informasjon", "info"], ["Kilde", "source"], ["Symbologi", "brush"], ["Påskrifter", "tag"], ["Masker", "mask"], ["3D-visning", "cube"],
  ["Diagrammer", "chart"], ["Felt", "fields"], ["Attributtskjema", "form"], ["Sammenføyninger", "join"], ["Støttelager", "aux"],
  ["Handlinger", "gear"], ["Visning", "tip"], ["Opptegning", "broom"], ["Tidsorientert", "clock"], ["Variabler", "eps"], ["Metadata", "meta"],
];

const styleRows: [string, React.ReactNode][] = [
  ["Tekst", <MiniAbc c="#66798c" />],
  ["Formatering", (
    <svg width="20" height="16" fontWeight="800"><path d="M1 4.500H6M3.500 2V7M5.500 9L2 11.500L5.500 14" fill="none" stroke="#999" /><text x="8" y="7" fontSize="9" fill="#333">ab</text><text x="13" y="15" fontSize="9" fill="#333">c</text></svg>
  )],
  ["Buffer", <MiniAbc c="#2f4680" blob="#8fb0f8" edge="#a9c2fb" />],
  ["Maske", <MiniAbc blob="#eef2fa" edge="#b7c0d6" />],
  ["Bakgrunn", (
    <svg width="19" height="17"><path d="M.8 4H18.200C19 10 15 15.500 9.500 16.500C4 15.500 0 10 .8 4Z" fill="#1a72b8" stroke="#3a5068" strokeWidth=".6" /><path d="M2 1L5 2L9.500 .8L14 2L17 1L18.200 4.300H.8Z" fill="#e02828" /></svg>
  )],
  ["Skygge", (
    <svg width="20" height="17"><path d="M4 3H17L19.500 6C19.500 12 16 16.500 11 17C7 16 3 12 4 3Z" fill="#7c869c" /><path d="M2.500 1L9 0L15.500 1L17.500 4C18 10 14 14.500 9 15.500C4 14.500 0 10 .6 4Z" fill="#eaf0fc" stroke="#9ba9cb" strokeWidth=".8" /></svg>
  )],
  ["Påskriftslinjer", (
    <svg width="18" height="18"><text x="1" y="7" fontSize="9" fontWeight="800" fill="#333" textLength="16">abc</text><path d="M3 18L10 9" stroke="#333" strokeWidth="1.500" /></svg>
  )],
  ["Plassering", (
    <svg width="18" height="18" fill="#8aa9be" stroke="#547389" strokeWidth=".8"><path d="M9 .3L12.500 3.500H10.800V6H7.200V3.500H5.500ZM9 17.700L12.500 14.500H10.800V12H7.200V14.500H5.500ZM.3 9L3.500 5.500V7.200H6V10.800H3.500V12.500ZM17.700 9L14.500 5.500V7.200H12V10.800H14.500V12.500Z" /></svg>
  )],
  ["Opptegning", (
    <svg width="17" height="17"><path d="M16.500 .5L9 7L11.500 9.500L15 6Z" fill="#aaa" stroke="#777" strokeWidth=".7" /><path d="M8.500 7.500L11 10C9 14 5 16 1 16C4 14 4.500 10 8.500 7.500Z" fill="#777" /></svg>
  )],
];

const fields = ["KOMMUNENUM", "LOKALID", "NAVN", "NAVNEROM", "OBJTYPE", "OPPDATERIN", "REF", "REKKEF\uFFFDLGE", "SAMISKFORV", "SOSI_ID"];

const Override = () => (
  <OverrideSlot><OverrideIcon /><Tri w={4} c="#333" /></OverrideSlot>
);

/* ---------- page ---------- */

export default function App() {
  return (
    <Screen>
      <Global />
      <DesktopEdge />
      <Docks>
        <DockTitle $h={22}>Utforsker<DockButtons><FloatIcon /><CloseIcon /></DockButtons></DockTitle>
        <DockTools $h={29}>
          <AddLayerIcon /><RefreshIcon /><FunnelIcon /><TreeArrowIcon /><InfoIcon />
        </DockTools>
        <TreeBox>
          <TreeRows>
            {tree.map(([name, depth, icon, arrow, track], i) => (
              <TreeRow key={i} $depth={depth} $track={track} $selected={icon === "poly"}>
                <ArrowSlot>{arrow && <Tri dir={arrow} c="#555" />}</ArrowSlot>
                <IconSlot $w={16} $ml={5} $mr={6}>{treeIcons[icon]}</IconSlot>
                {name}
              </TreeRow>
            ))}
          </TreeRows>
          <ScrollBar top={58} h={121} />
        </TreeBox>
        <DockSplit><svg width="17" height="3"><path d="M1 1.500H17" stroke="#aaa" strokeDasharray="1 2" /></svg></DockSplit>
        <DockTitle $h={20}>Lag<DockButtons><FloatIcon /><CloseIcon /></DockButtons></DockTitle>
        <DockTools $h={30}>
          <BrushIcon s={15} /><GroupIcon /><EyeIcon /><FunnelIcon menu />
          <EpsWrap><Epsilon $s={15}>Ɛ</Epsilon><svg width="7" height="9"><path d="M.5 9V4C.5 1 6.500 1 6.500 4V9M.5 9H2.500V5H4.500V9H6.500" fill="#bbb" stroke="#888" /></svg></EpsWrap>
          <MenuArrow><Tri w={7} /></MenuArrow>
          <TreeArrowIcon down /><TreeArrowIcon /><RemoveIcon />
        </DockTools>
        <LayerBox>
          <LayerRow><Check /><Swatch $fill="#dfa9ab" $edge="#b6b98c" />kf_sf_423</LayerRow>
          <LayerRow $active>
            <Check><svg width="10" height="10"><path d="M1.500 5L4 9L8.500 .8" fill="none" stroke="#111" strokeWidth="1.600" /></svg></Check>
            <Swatch $fill="#bbbbb6" $edge="#8f8f8f" />Kommune_FLATE
          </LayerRow>
        </LayerBox>
      </Docks>

      <Canvas>
        <MessageBar>
          <svg width="25" height="17"><path d="M1 2.500L8 7L24 .8L7 16Z" fill="#2fd23a" stroke="#147a1c" /></svg>
          <b>Lag eksportert:</b> Vektorlag lagra til <a>/Users/agwd/Dev/met2/kom_2017_mapB.csv</a>
          <svg width="17" height="17"><circle cx="8.500" cy="8.500" r="8.500" fill="#2e3133" /><path d="M5 5L12 12M12 5L5 12" stroke="#fff" strokeWidth="2.800" /></svg>
        </MessageBar>
        <MapArea><MunicipalityMap /></MapArea>
      </Canvas>

      <IdentifyDock>
        <IdentifyTitle>Identifisering</IdentifyTitle>
        <IdentifyTools>
          <svg width="14" height="14"><rect x=".5" y=".5" width="13" height="13" fill="#e3ebf4" stroke="#a6bbd2" /><path d="M2 4.500H5M2 9.500H5" stroke="#6e7f92" /><g fill="#fff" stroke="#8fabc9"><rect x="7.500" y="2.500" width="4" height="3" /><rect x="7.500" y="8.500" width="4" height="3" /></g></svg>
          <ToolRule />
          <TreeArrowIcon down /><TreeArrowIcon />
        </IdentifyTools>
        <IdentifyBox />
        <ModeRow>
          <ModeLabel>Modus</ModeLabel>
          <ModeColumn><ModeField>Gjeldende</ModeField><ModeField $ml={5} /></ModeColumn>
        </ModeRow>
      </IdentifyDock>

      <Dialog>
        <TitleBar>
          <Lights>
            <Light $c="#fe5149" $edge="#e2453e" /><Light $c="#d0d0d2" $edge="#bcbcbe" /><Light $c="#d0d0d2" $edge="#bcbcbe" />
          </Lights>
          Lagegenskaper – Kommune_FLATE — Påskrifter
        </TitleBar>
        <DialogBody>
          <Sidebar>
            <SideSearch><SearchIcon /></SideSearch>
            <SideMain>
              <SideList>
                {sections.map(([label, icon]) => (
                  <SideItem key={label} $on={icon === "tag"}>
                    <IconSlot $w={26} $mr={icon === "tag" ? 7 : 7} $ml={icon === "tag" ? 3 : 0}>{side[icon]}</IconSlot>
                    {label}
                  </SideItem>
                ))}
              </SideList>
              <ScrollBar h={438} w={13} />
            </SideMain>
          </Sidebar>
          <Content>
            <TopRow>
              <Combo $w={666}><IconSlot $w={15} $ml={2} $mr={4}><TagIcon w={15} h={9} /></IconSlot><Grow $track={-0.1}>Enkle påskrifter</Grow><Tri w={8} /></Combo>
              <SquareButton>
                <svg width="16" height="16"><path d="M1 5L5 1L8 3V8L3 8ZM6 1L9 4" fill="#7795b3" stroke="#3e5d7d" strokeDasharray="2 1" /><circle cx="9.800" cy="9.800" r="4" fill="#f3dd3d" stroke="#d9bf25" strokeWidth="2.500" strokeDasharray="2 1" /><circle cx="9.800" cy="9.800" r="1.800" fill="#fff8c8" stroke="#c4a91c" strokeWidth=".6" /></svg>
              </SquareButton>
            </TopRow>
            <TopRow $mt={6}>
              <FieldLabel $w={38}>Verdi</FieldLabel>
              <Combo $w={628} $flat>
                <TypeMark $small>abc</TypeMark><Grow $track={-0.4}>KOMMUNENUM</Grow>
                <ComboDrop $w={20} $dark><Tri w={8} /></ComboDrop>
                <Popup>
                  <Options>
                    {fields.map((f, i) => (
                      <Option key={f} $on={i === 0}><TypeMark $on={i === 0}>abc</TypeMark>{f}</Option>
                    ))}
                  </Options>
                  <ScrollBar h={178} />
                </Popup>
              </Combo>
              <SquareButton><Epsilon $s={18}>Ɛ</Epsilon></SquareButton>
            </TopRow>
            <SectionHead><Tri w={11} c="#333" />Eksempeltekst</SectionHead>
            <Group>
              <Preview>Lorem Ipsum<ScrollBar h={28} w={15} /></Preview>
              <SampleRow><SampleEdit>Lorem Ipsum</SampleEdit><SampleDrop><Tri w={7} /></SampleDrop></SampleRow>
            </Group>
            <Split>
              <StyleList>
                {styleRows.map(([label, icon], i) => (
                  <StyleRow key={label} $on={i === 0}><IconSlot $w={20} $ml={3} $mr={6}>{icon}</IconSlot>{label}</StyleRow>
                ))}
              </StyleList>
              <Settings>
                <FormRow $h={38}><FieldLabel $w={66} /><Wide><Combo $w={455} /></Wide><Override /></FormRow>
                <FormRow><FieldLabel $w={66} /><Wide><Combo $w={455} /></Wide><Override /></FormRow>
                <FormRow>
                  <FieldLabel $w={66} />
                  <Wide>
                    <FormatButton $deco="underline">U</FormatButton><Override />
                    <FormatButton $deco="line-through" $ml="8px">S</FormatButton><Override />
                    <FormatButton $dim $ml="auto">F</FormatButton><Override />
                    <FormatButton $dim $slant $ml="8px">K</FormatButton>
                  </Wide>
                  <Override />
                </FormRow>
                <FormRow>
                  <FieldLabel $w={66}>Størrelse</FieldLabel>
                  <Wide><InputBox $w={455}><Grow $track={0.1}>10,0000</Grow><Spinner><Tri dir="up" w={6} /><Tri w={6} /></Spinner></InputBox></Wide>
                  <Override />
                </FormRow>
                <FormRow>
                  <FieldLabel $w={66} />
                  <Wide><Combo $w={455}><Grow>Punkt</Grow><Tri w={8} /></Combo></Wide>
                  <Override />
                </FormRow>
                <FormRow>
                  <FieldLabel $w={66}>Farge</FieldLabel>
                  <Wide><ColorBox><ColorFill /></ColorBox><ColorDrop><Tri w={7} /></ColorDrop></Wide>
                  <Override />
                </FormRow>
                <FormRow>
                  <FieldLabel $w={66}>Dekkevne</FieldLabel>
                  <Wide>
                    <Track /><Knob />
                    <InputBox $w={100}><Grow>100,0 %</Grow><Spinner><Tri dir="up" w={6} c="#aaa" /><Tri w={6} /></Spinner></InputBox>
                  </Wide>
                  <Override />
                </FormRow>
                <FormRow $h={28}><Check /><Grow $pl={5} $track={-0.18}>Tillat HTML-formatering</Grow></FormRow>
                <FormRow $h={42}>
                  <Combo $w={527} $flat>
                    <IconSlot $w={13} $ml={6} $mr={6}><SearchIcon /></IconSlot>
                    <Grow $track={-0.17}>Alle innstillinger</Grow>
                    <IconSlot $w={13} $mr={9}><svg width="13" height="10"><path d="M4 0H13V10H4L0 5Z" fill="#8c8c8c" /><path d="M5 2.500L10 7.500M10 2.500L5 7.500" stroke="#fff" strokeWidth="1.300" /></svg></IconSlot>
                    <ComboDrop $w={20}><Tri w={8} /></ComboDrop>
                  </Combo>
                  <IconSlot $w={14} $ml={11}>
                    <svg width="14" height="14"><circle cx="3.500" cy="3.200" r="3" fill="#cf6132" /><rect x=".5" y="7.500" width="6" height="6" fill="#7aa57c" /><path d="M8.500 5.500L13 1" stroke="#4772a5" strokeWidth="2.200" /><text x="8.500" y="13.500" fontSize="8.500" fontWeight="600" fill="#555">a</text></svg>
                  </IconSlot>
                </FormRow>
                <BottomList />
              </Settings>
              <ScrollBar h={342} />
            </Split>
            <ButtonRow>
              <PushButton>Help</PushButton>
              <PushButton $menu>Stil<MenuMark><Tri w={5} /></MenuMark></PushButton>
              <PushButton>Apply</PushButton>
              <PushButton $push>Cancel</PushButton>
              <PushButton $primary>OK</PushButton>
            </ButtonRow>
          </Content>
        </DialogBody>
      </Dialog>
    </Screen>
  );
}
